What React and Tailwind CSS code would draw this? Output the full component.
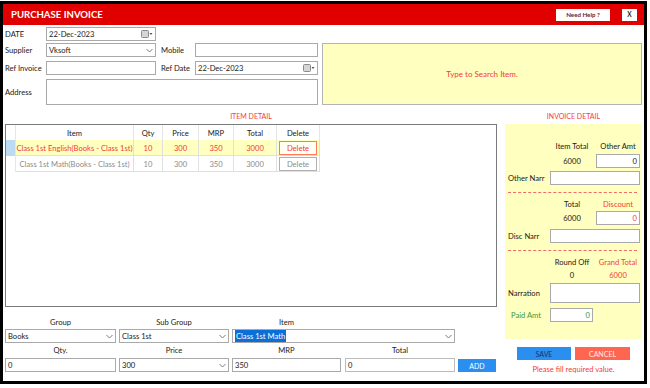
import React from 'react';

function Chevron() {
    return (
        <svg width="7" height="5" viewBox="0 0 7 5" className="shrink-0">
            <path d="M0.5 1 L3.5 4 L6.5 1" fill="none" stroke="#7a7a7a" strokeWidth="1" />
        </svg>
    );
}

function CalendarIcon() {
    return (
        <svg width="12" height="8" viewBox="0 0 12 8" className="shrink-0">
            <rect x="0.5" y="0.5" width="7" height="7" rx="1" fill="#d6d6d6" stroke="#8a8a8a" />
            <path d="M8.5 3 H11.5 L10 5 Z" fill="#555" />
        </svg>
    );
}

function Box({ className = '', children }) {
    return (
        <div className={`flex h-[14px] items-center border border-[#a9a9a9] bg-white px-[2px] ${className}`}>
            {children}
        </div>
    );
}

const cols = ['w-[118px]', 'w-[29px]', 'w-[36px]', 'w-[35px]', 'w-[43px]', 'w-[43px]'];
const headers = ['Item', 'Qty', 'Price', 'MRP', 'Total', 'Delete'];

const rows = [
    { item: 'Class 1st English(Books - Class 1st)', qty: '10', price: '300', mrp: '350', total: '3000', active: true },
    { item: 'Class 1st Math(Books - Class 1st)', qty: '10', price: '300', mrp: '350', total: '3000', active: false },
];

export default function App() {
    return (
        <div className="h-[388px] w-[650px] bg-white pt-[1px] font-['Lato',sans-serif] text-[7.6px] leading-[12px] whitespace-nowrap text-[#1a1a1a]">
            <div className="flex h-[383px] w-[647px] flex-col border-[3px] border-black">
                {/* title bar */}
                <div className="flex h-[21px] shrink-0 items-center bg-[#e10000] pl-[8px] pr-[7px]">
                    <span className="text-[9.6px] font-bold text-white">PURCHASE INVOICE</span>
                    <div className="ml-auto flex h-[12px] w-[54px] items-center justify-center bg-white text-[6.2px] font-bold text-[#6e1a1a]">
                        Need Help ?
                    </div>
                    <div className="ml-[12px] flex h-[12px] w-[15px] items-center justify-center bg-white text-[6.5px] font-bold text-[#222]">
                        X
                    </div>
                </div>

                {/* header form */}
                <div className="mt-[2px] flex h-[14px] items-center pl-[2px]">
                    <span className="w-[41px]">DATE</span>
                    <Box className="w-[110px]">
                        <span>22-Dec-2023</span>
                        <span className="ml-auto flex"><CalendarIcon /></span>
                    </Box>
                </div>

                <div className="mt-[2px] flex pl-[2px]">
                    <div className="flex w-[313px] flex-col">
                        <div className="flex h-[14px] items-center">
                            <span className="w-[41px]">Supplier</span>
                            <Box className="w-[110px] justify-between">
                                <span>Vksoft</span>
                                <Chevron />
                            </Box>
                            <span className="ml-[5px] w-[34px]">Mobile</span>
                            <Box className="w-[123px]" />
                        </div>
                        <div className="mt-[4px] flex h-[14px] items-center">
                            <span className="w-[41px]">Ref Invoice</span>
                            <Box className="w-[110px]" />
                            <span className="ml-[5px] w-[34px]">Ref Date</span>
                            <Box className="w-[123px]">
                                <span>22-Dec-2023</span>
                                <span className="ml-auto flex"><CalendarIcon /></span>
                            </Box>
                        </div>
                        <div className="mt-[4px] flex h-[26px] items-center">
                            <span className="w-[41px]">Address</span>
                            <div className="h-[26px] w-[272px] border border-[#a9a9a9] bg-white" />
                        </div>
                    </div>
                    <div className="ml-[4px] flex h-[62px] w-[320px] items-center justify-center border border-[#b4b4b4] bg-[#ffffc0] text-[8px] text-[#f23c3c]">
                        Type to Search Item.
                    </div>
                </div>

                {/* main */}
                <div className="flex pl-[2px]">
                    <div className="w-[492px]">
                        <div className="h-[19px] pt-[5px] text-center text-[7px] text-[#f43c3c]">ITEM DETAIL</div>

                        <div className="h-[183px] border border-[#7a7a7a] bg-white">
                            <div className="flex h-[15px]">
                                <div className="w-[10px] border-r border-[#e6e6e6]" />
                                {headers.map((h, i) => (
                                    <div key={h} className={`${cols[i]} flex items-center justify-center border-r border-[#e6e6e6]`}>
                                        {h}
                                    </div>
                                ))}
                            </div>
                            {rows.map((r) => (
                                <div key={r.item} className="flex h-[16px]">
                                    <div className={`w-[10px] border-r border-[#e6e6e6] ${r.active ? 'bg-[#bcdbf2]' : 'bg-white'}`} />
                                    <div className={`flex ${r.active ? 'bg-[#ffffc0] text-[#f23c3c]' : 'bg-white text-[#8c8c8c]'}`}>
                                        {[r.item, r.qty, r.price, r.mrp, r.total].map((v, i) => (
                                            <div key={i} className={`${cols[i]} flex items-center justify-center border-r border-b border-[#e0e0e0]`}>
                                                {v}
                                            </div>
                                        ))}
                                        <div className="flex w-[43px] items-center justify-center border-r border-b border-[#e0e0e0] px-[2px]">
                                            {r.active ? (
                                                <div className="flex h-[14px] w-full items-center justify-center border-[1.5px] border-[#ff7a55] bg-[#fffff4] text-[#f23c3c]">
                                                    Delete
                                                </div>
                                            ) : (
                                                <div className="flex h-[14px] w-full items-center justify-center border-[1.5px] border-[#b0b0b0] bg-white text-[#8c8c8c]">
                                                    Delete
                                                </div>
                                            )}
                                        </div>
                                    </div>
                                </div>
                            ))}
                        </div>

                        {/* entry form */}
                        <div className="mt-[9px] flex h-[12px] items-center text-center">
                            <span className="w-[111px]">Group</span>
                            <span className="ml-[3px] w-[110px]">Sub Group</span>
                            <span className="ml-[3px] w-[109px]">Item</span>
                        </div>
                        <div className="mt-[1px] flex">
                            <Box className="w-[111px] justify-between">
                                <span>Books</span>
                                <Chevron />
                            </Box>
                            <Box className="ml-[3px] w-[110px] justify-between">
                                <span>Class 1st</span>
                                <Chevron />
                            </Box>
                            <Box className="ml-[3px] w-[223px] justify-between border-[#3c8ee0]">
                                <span className="bg-[#0a6fd6] px-[1px] text-white">Class 1st Math</span>
                                <Chevron />
                            </Box>
                        </div>
                        <div className="flex h-[14px] items-center text-center">
                            <span className="w-[111px]">Qty.</span>
                            <span className="ml-[3px] w-[110px]">Price</span>
                            <span className="ml-[3px] w-[109px]">MRP</span>
                            <span className="ml-[4px] w-[110px]">Total</span>
                        </div>
                        <div className="mt-[1px] flex items-start">
                            <Box className="w-[111px]">0</Box>
                            <Box className="ml-[3px] w-[110px] justify-between">
                                <span>300</span>
                                <Chevron />
                            </Box>
                            <Box className="ml-[3px] w-[109px]">350</Box>
                            <Box className="ml-[4px] w-[110px] border-[#bcbcbc] bg-[#efefef]">0</Box>
                            <div className="ml-[3px] mt-[1px] flex h-[13px] w-[38px] items-center justify-center bg-[#2b8ff0] text-[7px] text-white">
                                ADD
                            </div>
                        </div>
                    </div>

                    {/* invoice detail */}
                    <div className="ml-[8px] w-[137px]">
                        <div className="h-[19px] pt-[5px] text-center text-[7px] text-[#f43c3c]">INVOICE DETAIL</div>
                        <div className="flex h-[215px] flex-col bg-[#ffffc0] pl-[3px] pr-[2px] pt-[16px]">
                            <div className="flex h-[12px] items-center text-center">
                                <span className="w-[42px]" />
                                <span className="w-[44px]">Item Total</span>
                                <span className="ml-[2px] w-[44px]">Other Amt</span>
                            </div>
                            <div className="mt-[2px] flex h-[14px] items-center text-center">
                                <span className="w-[42px]" />
                                <span className="w-[44px]">6000</span>
                                <Box className="ml-[2px] w-[44px] justify-end">0</Box>
                            </div>
                            <div className="mt-[3px] flex h-[14px] items-center">
                                <span className="w-[42px]">Other Narr</span>
                                <Box className="w-[90px]" />
                            </div>
                            <div className="mr-[3px] mt-[7px] border-t border-dashed border-[#f36a6a]" />
                            <div className="mt-[5px] flex h-[12px] items-center text-center">
                                <span className="w-[42px]" />
                                <span className="w-[44px]">Total</span>
                                <span className="ml-[2px] w-[44px] text-[#f23c3c]">Discount</span>
                            </div>
                            <div className="mt-[1px] flex h-[14px] items-center text-center">
                                <span className="w-[42px]" />
                                <span className="w-[44px]">6000</span>
                                <Box className="ml-[2px] w-[44px] justify-end text-[#f23c3c]">0</Box>
                            </div>
                            <div className="mt-[4px] flex h-[14px] items-center">
                                <span className="w-[42px]">Disc Narr</span>
                                <Box className="w-[90px]" />
                            </div>
                            <div className="mr-[3px] mt-[7px] border-t border-dashed border-[#f36a6a]" />
                            <div className="mt-[5px] flex h-[12px] items-center text-center">
                                <span className="w-[42px]" />
                                <span className="w-[44px]">Round Off</span>
                                <span className="ml-[2px] w-[44px] text-[#f23c3c]">Grand Total</span>
                            </div>
                            <div className="mt-[1px] flex h-[12px] items-center text-center">
                                <span className="w-[42px]" />
                                <span className="w-[44px]">0</span>
                                <span className="ml-[2px] w-[44px] text-[#f23c3c]">6000</span>
                            </div>
                            <div className="mt-[2px] flex h-[20px] items-center">
                                <span className="w-[42px]">Narration</span>
                                <div className="h-[20px] w-[90px] border border-[#a9a9a9] bg-white" />
                            </div>
                            <div className="mt-[5px] flex h-[14px] items-center">
                                <span className="w-[42px] pl-[3px] text-[#3a9a3a]">Paid Amt</span>
                                <Box className="w-[43px] justify-end text-[#3a9a3a]">0</Box>
                            </div>
                        </div>
                        <div className="mt-[8px] flex justify-center gap-[4px]">
                            <div className="flex h-[13px] w-[54px] items-center justify-center bg-[#2b8ff0] text-[7px] text-[#15336e]">
                                SAVE
                            </div>
                            <div className="flex h-[13px] w-[55px] items-center justify-center bg-[#ff6650] text-[7px] text-[#ffe8e4]">
                                CANCEL
                            </div>
                        </div>
                        <div className="mt-[3px] text-center text-[#f23c3c]">Please fill required value.</div>
                    </div>
                </div>
            </div>
        </div>
    );
}
